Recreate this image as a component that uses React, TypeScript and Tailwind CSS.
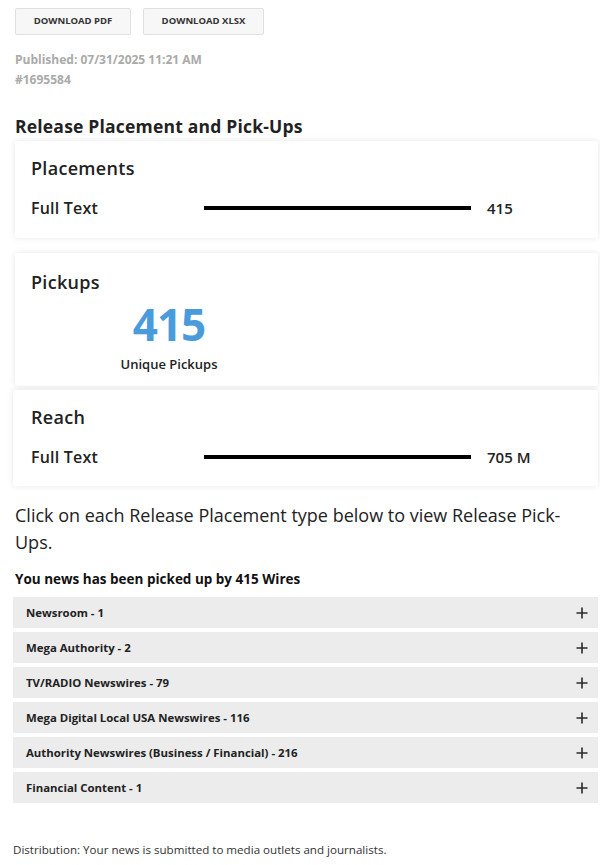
import { ReactElement } from "react"

const FONT = { fontFamily: '"Open Sans", "Noto Sans", sans-serif' }

const CARD_CLASSNAME = 'bg-white rounded-[3px] shadow-[0_0_6px_rgba(0,0,0,0.10)]'

const WIRES = [
    'Newsroom - 1',
    'Mega Authority - 2',
    'TV/RADIO Newswires - 79',
    'Mega Digital Local USA Newswires - 116',
    'Authority Newswires (Business / Financial) - 216',
    'Financial Content - 1',
]

const PlusIcon = (): ReactElement => (
    <svg width="12" height="12" viewBox="0 0 12 12" fill="none" stroke="#2a2a2a" strokeWidth="1.6">
        <path d="M6 0.5v11M0.5 6h11"/>
    </svg>
)

const BarRow = ({ label, value }: { label: string, value: string }): ReactElement => {
    return (
        <div className="flex items-center h-[22px]">
            <span className="w-[173px] text-[16px] font-semibold text-[#222] tracking-[0.2px]">{label}</span>
            <div className="w-[267px] h-[4px] bg-black"/>
            <span className="ml-[16px] text-[15px] font-semibold text-[#222]">{value}</span>
        </div>
    )
}

const App = (): ReactElement => {
    return (
        <div className="w-[600px] min-h-[865px] bg-white pl-[15px] pr-[2px] pt-[8px]" style={FONT}>
            {/* download buttons */}
            <div className="flex gap-x-[12px]">
                <button className="w-[116px] h-[27px] border border-[#e0e0e0] bg-[#f7f7f7] rounded-[2px] text-[9.5px] font-bold text-[#333]">DOWNLOAD PDF</button>
                <button className="w-[121px] h-[27px] border border-[#e0e0e0] bg-[#f7f7f7] rounded-[2px] text-[9.5px] font-bold text-[#333]">DOWNLOAD XLSX</button>
            </div>

            <div className="mt-[15px] text-[12px] font-bold text-[#aaa] leading-[20px]">
                <p>Published: 07/31/2025 11:21 AM</p>
                <p>#1695584</p>
            </div>

            <h2 className="mt-[25px] text-[17.5px] font-bold text-[#222] leading-[22px] tracking-[0.2px]">Release Placement and Pick-Ups</h2>

            {/* placements */}
            <div className={`${CARD_CLASSNAME} mt-[4px] h-[97px] px-[16px] pt-[15px]`}>
                <h3 className="text-[18px] font-semibold text-[#222] leading-[24px] tracking-[0.3px]">Placements</h3>
                <div className="mt-[17px]">
                    <BarRow label="Full Text" value="415"/>
                </div>
            </div>

            {/* pickups */}
            <div className={`${CARD_CLASSNAME} mt-[15px] h-[133px] px-[16px] pt-[17px]`}>
                <h3 className="text-[18px] font-semibold text-[#222] leading-[24px] tracking-[0.3px]">Pickups</h3>
                <div className="w-[140px] ml-[68px] flex flex-col items-center">
                    <span className="text-[44px] font-bold text-[#4a9bdb] leading-[61px] tracking-[-1px]">415</span>
                    <span className="text-[13px] font-semibold text-[#222] leading-[18px]">Unique Pickups</span>
                </div>
            </div>

            {/* reach */}
            <div className={`${CARD_CLASSNAME} mt-[4px] -ml-[2px] h-[96px] px-[18px] pt-[15px]`}>
                <h3 className="text-[18px] font-semibold text-[#222] leading-[24px] tracking-[0.3px]">Reach</h3>
                <div className="mt-[17px]">
                    <BarRow label="Full Text" value="705 M"/>
                </div>
            </div>

            <p className="mt-[16px] text-[18px] text-[#222] leading-[27px] pr-[10px]">Click on each Release Placement type below to view Release Pick-Ups.</p>

            <p className="mt-[14px] text-[13.5px] font-bold text-[#111] leading-[18px]">You news has been picked up by 415 Wires</p>

            {/* wires accordion */}
            <div className="mt-[9px] -ml-[2px] flex flex-col gap-y-[4px]">
                {WIRES.map((wire) => (
                    <div key={wire} className="h-[31px] bg-[#ececec] flex items-center justify-between pl-[13px] pr-[10px]">
                        <span className="text-[11.4px] font-bold text-[#222]">{wire}</span>
                        <PlusIcon/>
                    </div>
                ))}
            </div>

            <p className="mt-[38px] -ml-[2px] text-[11.6px] text-[#333]">Distribution: Your news is submitted to media outlets and journalists.</p>
        </div>
    )
}

export default App
